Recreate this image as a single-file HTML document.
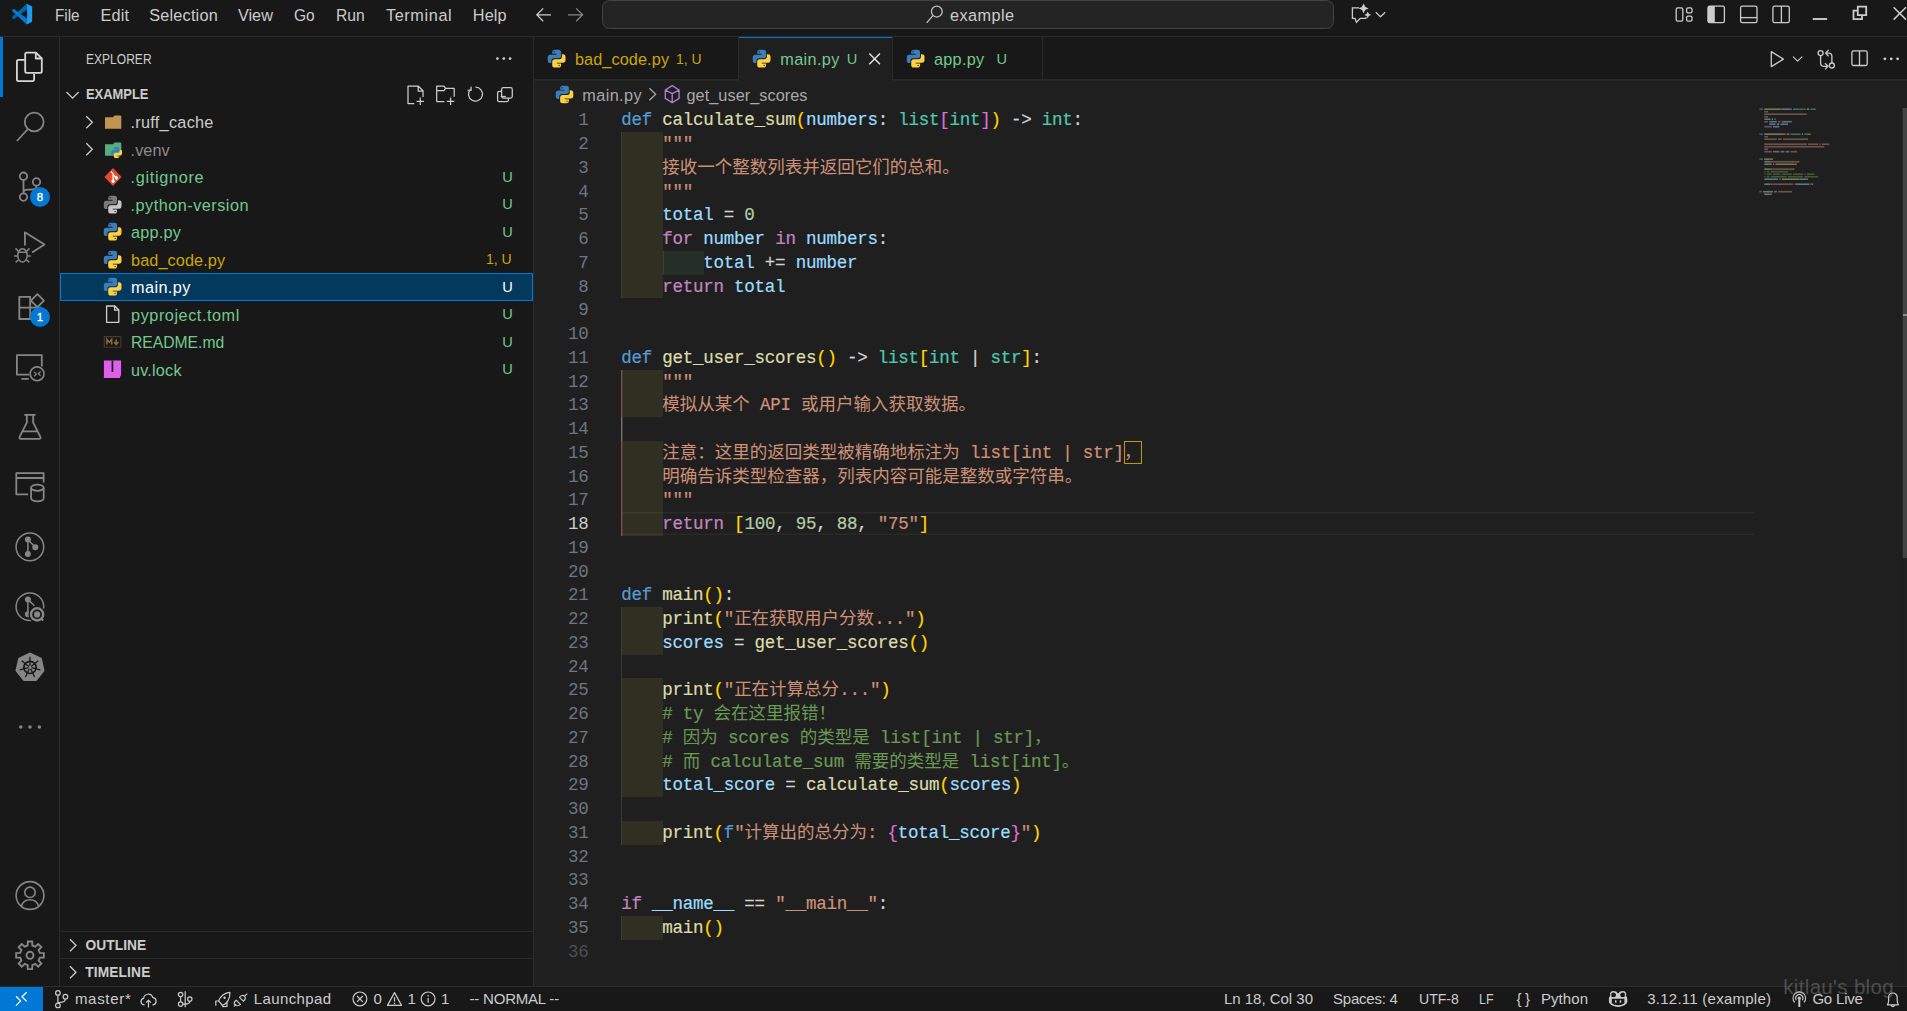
<!DOCTYPE html>
<html lang="en"><head><meta charset="utf-8"><title>main.py - example - Visual Studio Code</title>
<style>
*{box-sizing:border-box;margin:0;padding:0}
html,body{width:1907px;height:1011px;overflow:hidden;background:#1f1f1f}
body{position:relative;font-family:"Liberation Sans",sans-serif;color:#ccc;font-size:16.25px}
.abs{position:absolute}
.t{position:absolute;line-height:1;white-space:pre}
svg{position:absolute;overflow:visible}
.code{position:absolute;left:621.3px;white-space:pre;font-family:"Liberation Mono","Noto Sans CJK SC",monospace;font-size:17.5px;letter-spacing:-0.248px;-webkit-text-stroke:0.2px;line-height:23.75px;height:23.75px;color:#d4d4d4}
.code .z{font-family:"Liberation Mono","Noto Sans CJK SC",sans-serif;font-size:17.5px;line-height:1px;letter-spacing:0;-webkit-text-stroke:0}
.ln{position:absolute;left:534px;width:54.5px;text-align:right;font-family:"Liberation Mono",monospace;font-size:17.5px;letter-spacing:-0.248px;line-height:23.75px;height:23.75px;color:#6e7681}
.c-k{color:#569cd6}.c-c{color:#c586c0}.c-f{color:#dcdcaa}.c-v{color:#9cdcfe}.c-t{color:#4ec9b0}.c-s{color:#ce9178}.c-n{color:#b5cea8}.c-m{color:#6a9955}.c-p1{color:#ffd700}.c-p2{color:#da70d6}.c-p3{color:#179fff}.c-d{color:#d4d4d4}</style></head>
<body>
<div class="abs" style="left:0;top:0;width:1907px;height:36px;background:#181818"></div>
<div class="abs" style="left:0;top:36px;width:1907px;height:1px;background:#2b2b2b"></div>
<div class="abs" style="left:0;top:37px;width:59px;height:949px;background:#181818"></div>
<div class="abs" style="left:59px;top:37px;width:1px;height:949px;background:#2b2b2b"></div>
<div class="abs" style="left:60px;top:37px;width:473px;height:949px;background:#181818"></div>
<div class="abs" style="left:533px;top:37px;width:1px;height:949px;background:#2b2b2b"></div>
<div class="abs" style="left:534px;top:37px;width:1373px;height:43px;background:#181818"></div>
<div class="abs" style="left:534px;top:79.5px;width:1373px;height:1.25px;background:#2b2b2b"></div>
<div class="abs" style="left:0;top:986px;width:1907px;height:25px;background:#181818"></div>
<div class="abs" style="left:0;top:986px;width:1907px;height:1px;background:#2b2b2b"></div>
<svg style="left:12px;top:3.8px" width="20.2" height="20.2" viewBox="0 0 100 100">
<path fill="#0065a9" d="M96.46 10.8 75.86.88a6.23 6.23 0 0 0-7.11 1.2L1.3 63.58a4.17 4.17 0 0 0 0 6.17l5.51 5a2.77 2.77 0 0 0 3.54.16L93.36 13.37c2.73-2.07 6.64-.12 6.64 3.3v-.24a6.25 6.25 0 0 0-3.54-5.63z"/>
<path fill="#007acc" d="M96.46 89.2 75.86 99.12a6.23 6.23 0 0 1-7.11-1.2L1.3 36.42a4.17 4.17 0 0 1 0-6.17l5.51-5a2.77 2.77 0 0 1 3.54-.16L93.36 86.63c2.73 2.07 6.64.12 6.64-3.3v.24a6.25 6.25 0 0 1-3.54 5.63z"/>
<path fill="#1f9cf0" d="M75.86 99.13a6.23 6.23 0 0 1-7.11-1.21c2.31 2.3 6.25.67 6.25-2.59V4.67c0-3.26-3.94-4.89-6.25-2.59a6.23 6.23 0 0 1 7.11-1.21l20.6 9.91A6.25 6.25 0 0 1 100 16.41v67.18a6.25 6.25 0 0 1-3.54 5.63z"/>
</svg>
<span class="t " style="left:54.70px;top:6.94px;font-size:16.25px;color:#cccccc;transform-origin:0.00px 0;transform:scaleX(0.9371);">File</span>
<span class="t " style="left:100.60px;top:6.94px;font-size:16.25px;color:#cccccc;letter-spacing:0.100px;">Edit</span>
<span class="t " style="left:149.30px;top:6.94px;font-size:16.25px;color:#cccccc;letter-spacing:0.194px;">Selection</span>
<span class="t " style="left:237.90px;top:6.94px;font-size:16.25px;color:#cccccc;letter-spacing:0.017px;">View</span>
<span class="t " style="left:294.00px;top:6.94px;font-size:16.25px;color:#cccccc;transform-origin:0.00px 0;transform:scaleX(0.9563);">Go</span>
<span class="t " style="left:336.00px;top:6.94px;font-size:16.25px;color:#cccccc;transform-origin:0.00px 0;transform:scaleX(0.9613);">Run</span>
<span class="t " style="left:385.90px;top:6.94px;font-size:16.25px;color:#cccccc;letter-spacing:0.629px;">Terminal</span>
<span class="t " style="left:472.80px;top:6.94px;font-size:16.25px;color:#cccccc;letter-spacing:0.133px;">Help</span>
<svg style="left:530px;top:4px" width="60" height="22" viewBox="530 4 60 22" fill="none" stroke-width="1.3" stroke-linecap="butt">
<path stroke="#cccccc" d="M551 14.8H537M543.2 8.4l-6.4 6.4 6.4 6.4"/>
<path stroke="#858585" d="M568 14.8h14M576.2 8.4l6.4 6.4-6.4 6.4"/>
</svg>
<div class="abs" style="left:602px;top:0px;width:732px;height:29px;background:#242424;border:1px solid #434343;border-radius:7.5px"></div>
<svg style="left:924px;top:3px" width="24" height="24" viewBox="924 3 24 24" fill="none" stroke="#c4c4c4" stroke-width="1.25">
<circle cx="936.8" cy="11.6" r="5.4"/><path d="M932.9 15.6l-6.2 7.2"/></svg>
<span class="t " style="left:950.00px;top:6.74px;font-size:16.25px;color:#cccccc;letter-spacing:0.450px;">example</span>
<svg style="left:1350px;top:3px" width="40" height="24" viewBox="1350 3 40 24" fill="none" stroke="#cccccc" stroke-width="1.3" stroke-linejoin="round">
<path stroke-linejoin="miter" d="M1359.2 7.900H1352.400V18.300H1355L1356.400 22.300L1360.300 18.300H1366V17.300"/>
<path fill="#cccccc" stroke="none" d="M1363.60 3.50L1365.22 6.78L1368.50 8.40L1365.22 10.02L1363.60 13.30L1361.98 10.02L1358.70 8.40L1361.98 6.78Z"/>
<path fill="#cccccc" stroke="none" d="M1367.70 11.50L1368.82 13.78L1371.10 14.90L1368.82 16.02L1367.70 18.30L1366.58 16.02L1364.30 14.90L1366.58 13.78Z"/>
<path stroke-width="1.200" d="M1375.800 12.200l4.700 4.600 4.700-4.600"/>
</svg>
<svg style="left:1670px;top:0px" width="237" height="36" viewBox="1670 0 237 36" fill="none" stroke="#cccccc" stroke-width="1.3">
<rect x="1676.2" y="7.8" width="6.6" height="13.4" rx="1.6"/>
<rect x="1686.6" y="7.8" width="5.4" height="5" rx="1.4"/>
<rect x="1686.6" y="16.2" width="5.4" height="5" rx="1.4"/>
<rect x="1708" y="6.1" width="16.4" height="16.6" rx="1.8"/>
<path fill="#cccccc" stroke="none" d="M1709.6 6.1h5.2v16.6h-5.2a1.8 1.8 0 0 1-1.8-1.8V7.9a1.8 1.8 0 0 1 1.8-1.8z"/>
<rect x="1740.6" y="6.1" width="16.4" height="16.6" rx="1.8"/>
<path d="M1740.6 17.6h16.4"/>
<rect x="1772.9" y="6.1" width="16.4" height="16.6" rx="1.8"/>
<path d="M1781.4 6.1v16.6"/>
<path stroke-width="1.900" d="M1812.800 19h14.300"/>
<path stroke-width="1.800" d="M1857.800 6.700h8.400v8.400h-8.400zM1857.800 10.700h-4.300v8.500h8.500v-4"/>
<path stroke-width="1.5" d="M1893.6 7.2l12.4 12.4M1906 7.2l-12.4 12.4"/>
</svg>
<div class="abs" style="left:0;top:37px;width:2.6px;height:59.6px;background:#0078d4"></div>
<svg style="left:0;top:37px" width="59" height="949" viewBox="0 37 59 949" fill="none" stroke="#868686" stroke-width="1.8" stroke-linejoin="round">
<!-- files (active) -->
<g stroke="#d7d7d7">
<path d="M36 52.7h-9.2a1.6 1.6 0 0 0-1.6 1.6v17a1.6 1.6 0 0 0 1.6 1.6h13.4a1.6 1.6 0 0 0 1.6-1.6V58.5zM35.8 52.9v5.6h5.8"/>
<path d="M24.6 59.9h-6.1a1.6 1.6 0 0 0-1.6 1.6v18a1.6 1.6 0 0 0 1.6 1.6h14a1.6 1.6 0 0 0 1.6-1.6v-5.4"/>
</g>
<!-- search -->
<circle cx="34.2" cy="122" r="9.4"/><path d="M27.9 129l-11 12"/>
<!-- source control -->
<circle cx="23.5" cy="176.2" r="3.7"/><circle cx="23.5" cy="197.1" r="3.7"/><circle cx="36.5" cy="181.9" r="3.7"/>
<path d="M23.5 180v13.3M36.5 185.7c0 3.9-3 3.9-6.5 3.9h-2.5c-2 0-4 .5-4 3"/>
<!-- debug -->
<path d="M24.9 245.6V232.3l19.6 12.1-12.4 8"/>
<g stroke-width="1.5"><ellipse cx="22.5" cy="255.4" rx="4.7" ry="6.6"/><path d="M17.9 252.2h9.2M17.8 256h-3.6M27.2 256h3.6M18.4 251.3l-2.9-2.9M26.6 251.3l2.9-2.9M18.6 259.8l-3 2.6M26.4 259.8l3 2.6"/></g>
<!-- extensions -->
<path d="M19.3 296.9h10.9v10.7H41V319H19.3zM30.2 307.6V319M19.3 307.6h10.9"/>
<path d="M37.4 294.2l6.5 6.5-6.5 6.5-6.5-6.5z"/>
<!-- remote explorer -->
<path d="M29.4 374.6H16.9v-19.4h24.9v11.2M21.4 378.8h7.4"/>
<circle cx="37.1" cy="373.8" r="6.9" stroke-width="1.6"/>
<path stroke-width="1.3" d="M34.1 371.9l2.3 2.2-2.3 2.2M40.6 371.5l-2.3 2.2 2.3 2.2"/>
<!-- beaker -->
<path d="M24.3 414.8h11.3M26.8 414.8v7.9l-7.2 14.1c-.6 1.2 0 2 1.300 2h18.2c1.300 0 1.900-.8 1.300-2l-7.200-14.100v-7.900M22.600 431.400h14.800"/>
<!-- database window -->
<path d="M43.600 482.600v-9.400H16.300v21.100h11.800M16.300 478h27.300"/>
<ellipse cx="37.400" cy="487.700" rx="6.300" ry="3.100"/><path d="M31.100 487.700v10.600a6.300 3.100 0 0 0 12.600 0v-10.600"/>
<!-- gitlens -->
<g stroke-width="1.5"><circle cx="29.900" cy="546.900" r="13.800"/><path d="M27.900 539.500v14.600M27.900 539.500l7.400 7.700"/></g>
<g fill="#868686" stroke="none"><circle cx="27.900" cy="539.500" r="3"/><circle cx="27.900" cy="554.100" r="3"/><circle cx="35.300" cy="547.200" r="3"/></g>
<!-- gitlens inspect -->
<g stroke-width="1.5"><circle cx="29.900" cy="606.800" r="13.800"/><path d="M27.900 599.400v14.900M27.900 599.400l6.500 6.400"/></g>
<g fill="#868686" stroke="none"><circle cx="27.900" cy="599.400" r="3"/><circle cx="27.900" cy="614.300" r="3"/></g>
<circle cx="37.100" cy="614.400" r="8.600" fill="#181818" stroke="none"/>
<circle cx="37.100" cy="614.400" r="6.100" stroke-width="2.400"/><circle cx="37.100" cy="614.400" r="3.100" fill="#868686" stroke="none"/>
<path stroke-width="2.200" d="M41.600 619l1.500 1.500"/>
<!-- kubernetes -->
<path fill="#868686" stroke-width="2.500" d="M30.00 653.80L40.63 658.92L43.26 670.43L35.90 679.65L24.10 679.65L16.74 670.43L19.37 658.92Z"/>
<g stroke="#181818"><circle cx="30" cy="667.400" r="6.100" stroke-width="1.700"/><path stroke-width="1.300" d="M30.00 665.90L30.00 656.80M31.17 666.46L38.29 660.79M31.46 667.73L40.33 669.76M30.65 668.75L34.60 676.95M29.35 668.75L25.40 676.95M28.54 667.73L19.67 669.76M28.83 666.46L21.71 660.79"/></g>
<circle cx="30" cy="667.400" r="1.200" fill="#868686" stroke="none"/>
<!-- more -->
<g fill="#868686" stroke="none"><circle cx="20.800" cy="726.900" r="1.750"/><circle cx="30" cy="726.900" r="1.750"/><circle cx="39.400" cy="726.900" r="1.750"/></g>
<!-- account -->
<g stroke-width="1.600"><circle cx="30" cy="895.500" r="13.900"/><circle cx="30" cy="892.300" r="5.200"/><path d="M21.400 906.300c1.200-4.400 4.600-6.500 8.600-6.500s7.400 2.100 8.600 6.500"/></g>
<!-- settings -->
<path stroke-width="1.900" stroke-linejoin="miter" d="M27.64 945.48L27.81 941.47L32.19 941.47L32.36 945.48L35.28 946.69L38.23 943.97L41.33 947.07L38.61 950.02L39.82 952.94L43.83 953.11L43.83 957.49L39.82 957.66L38.61 960.58L41.33 963.53L38.23 966.63L35.28 963.91L32.36 965.12L32.19 969.13L27.81 969.13L27.64 965.12L24.72 963.91L21.77 966.63L18.67 963.53L21.39 960.58L20.18 957.66L16.17 957.49L16.17 953.11L20.18 952.94L21.39 950.02L18.67 947.07L21.77 943.97L24.72 946.69Z"/><circle cx="30" cy="955.300" r="3.500" stroke-width="1.900"/>
</svg>
<div class="abs" style="left:30px;top:186.7px;width:20px;height:20px;border-radius:10px;background:#0078d4;color:#fff;font-size:11.5px;-webkit-text-stroke:0.35px;line-height:20px;text-align:center">8</div>
<div class="abs" style="left:30px;top:306.7px;width:20px;height:20px;border-radius:10px;background:#0078d4;color:#fff;font-size:11.5px;-webkit-text-stroke:0.35px;line-height:20px;text-align:center">1</div>
<span class="t " style="left:85.50px;top:52.86px;font-size:13.75px;color:#cccccc;transform-origin:0.00px 0;transform:scaleX(0.8760);">EXPLORER</span>
<svg style="left:490px;top:52px" width="30" height="14" viewBox="490 52 30 14" fill="#cccccc"><circle cx="497.4" cy="58.6" r="1.35"/><circle cx="503.8" cy="58.6" r="1.35"/><circle cx="510.1" cy="58.6" r="1.35"/></svg>
<svg style="left:60px;top:80px" width="30" height="28" viewBox="60 80 30 28" fill="none" stroke="#cccccc" stroke-width="1.3"><path d="M66.5 92l6.100 6.100 6.100-6.100"/></svg>
<span class="t " style="left:85.50px;top:88.06px;font-size:13.75px;color:#cccccc;transform-origin:0.00px 0;transform:scaleX(0.9398);font-weight:bold;">EXAMPLE</span>
<svg style="left:400px;top:81px" width="120" height="27" viewBox="400 81 120 27" fill="none" stroke="#cccccc" stroke-width="1.25" stroke-linejoin="round">
<path d="M414.200 103.600h-6.200V86.200h10.400l4.600 4.600v6.100M418.200 86.400v4.600h4.600M420.300 97.600v7.400M416.600 101.300h7.400"/>
<path d="M444.400 101.500h-7.700V86.200h7.300l1.600 2.200h8.600v8.300M436.700 90.600h7.300l1.600-2.200M450.600 97.600v7.400M446.900 101.300h7.400"/>
<path d="M470.300 89.400a7 7 0 1 0 5.200-2.300M471 86.600l.2 3.600-3.600.2" stroke-linejoin="miter"/>
<rect x="501.600" y="87.600" width="10.700" height="10.400" rx="1.800"/>
<path d="M501.400 91.300h-2a1.800 1.800 0 0 0-1.800 1.800v6.800a1.800 1.800 0 0 0 1.800 1.800h7.200a1.800 1.800 0 0 0 1.800-1.800v-1.800" />
<path d="M500.700 96.500h5.200"/>
</svg>
<div class="abs" style="left:60px;top:273.25px;width:473px;height:27.5px;background:#04395e;border:1px solid #0078d4"></div>
<span class="t " style="left:130.50px;top:114.14px;font-size:16.25px;color:#cccccc;letter-spacing:0.280px;">.ruff_cache</span>
<svg style="left:84px;top:113.80px" width="12" height="16" viewBox="84 0 12 16" fill="none" stroke="#cccccc" stroke-width="1.3"><path d="M86.300 2.200l6 6-6 6"/></svg>
<svg style="left:103px;top:111.80px" width="20" height="20" viewBox="0 0 20 20"><path fill="#c09553" d="M2 5.300h8l1.500-1.800h5.700a1.100 1.100 0 0 1 1.100 1.100v12.100H2z"/></svg>
<span class="t " style="left:130.60px;top:141.64px;font-size:16.25px;color:#8c8c8c;letter-spacing:0.050px;">.venv</span>
<svg style="left:84px;top:141.30px" width="12" height="16" viewBox="84 0 12 16" fill="none" stroke="#cccccc" stroke-width="1.3"><path d="M86.300 2.200l6 6-6 6"/></svg>
<svg style="left:103px;top:139.30px" width="20" height="20" viewBox="0 0 20 20"><path fill="#57ae7d" d="M2 5.300h8l1.500-1.800h5.700a1.100 1.100 0 0 1 1.100 1.100v12.100H2z"/></svg>
<svg style="left:110.10px;top:145.80px" width="13.20" height="13.20" viewBox="0 0 24 24"><path fill="#3c7ebb" d="M9.860 2A2.860 2.860 0 0 0 7 4.860v1.680h4.290c.390 0 .710.570.710.960H4.860A2.860 2.860 0 0 0 2 10.360v3.780A2.860 2.860 0 0 0 4.860 17h1.180v-2.680a2.850 2.850 0 0 1 2.850-2.860h5.250A2.860 2.860 0 0 0 17 8.610V4.860A2.860 2.860 0 0 0 14.140 2zm-.72 1.610c.4 0 .72.120.72.710s-.32.890-.72.890c-.39 0-.71-.3-.71-.89s.32-.71.710-.71z"/><path fill="#fdd142" d="M17.960 7v2.680a2.850 2.850 0 0 1-2.850 2.860H9.860A2.850 2.850 0 0 0 7 15.390v3.750A2.860 2.860 0 0 0 9.860 22h4.280A2.860 2.860 0 0 0 17 19.140v-1.680h-4.290c-.39 0-.71-.57-.71-.96h7.140A2.860 2.860 0 0 0 22 13.640V9.860A2.860 2.860 0 0 0 19.140 7zm-3.100 11.790c.39 0 .71.300.71.890a.71.710 0 0 1-.71.710c-.4 0-.72-.12-.72-.71s.32-.89.720-.89z"/></svg>
<span class="t " style="left:130.60px;top:169.14px;font-size:16.25px;color:#73c991;letter-spacing:0.683px;">.gitignore</span>
<span class="t " style="left:502.30px;top:169.94px;font-size:14.60px;color:#73c991;">U</span>
<svg style="left:103px;top:167.00px" width="20" height="20" viewBox="0 0 20 20"><path fill="#e24a2f" d="M10 1l8.600 9-8.600 9-8.600-9z"/><g stroke="#fff" stroke-width="1.300" fill="#fff"><path d="M8 4.500l2.100 2.400v7M10.100 7.500l3.100 3.200" fill="none"/><circle cx="10.100" cy="14.200" r="1.100"/><circle cx="13.400" cy="10.900" r="1.100"/></g></svg>
<span class="t " style="left:130.60px;top:196.64px;font-size:16.25px;color:#73c991;letter-spacing:0.486px;">.python-version</span>
<span class="t " style="left:502.30px;top:197.44px;font-size:14.60px;color:#73c991;">U</span>
<svg style="left:102.15px;top:193.75px" width="21.30" height="21.30" viewBox="0 0 24 24"><path fill="#7a7a7a" d="M9.860 2A2.860 2.860 0 0 0 7 4.860v1.680h4.290c.390 0 .710.570.710.960H4.860A2.860 2.860 0 0 0 2 10.360v3.780A2.860 2.860 0 0 0 4.860 17h1.180v-2.680a2.850 2.850 0 0 1 2.850-2.860h5.250A2.860 2.860 0 0 0 17 8.610V4.860A2.860 2.860 0 0 0 14.140 2zm-.72 1.610c.4 0 .72.120.72.710s-.32.890-.72.890c-.39 0-.71-.3-.71-.89s.32-.71.710-.71z"/><path fill="#c8c8c8" d="M17.960 7v2.680a2.850 2.850 0 0 1-2.850 2.860H9.860A2.850 2.850 0 0 0 7 15.390v3.750A2.860 2.860 0 0 0 9.860 22h4.280A2.860 2.860 0 0 0 17 19.140v-1.680h-4.290c-.39 0-.71-.57-.71-.96h7.140A2.860 2.860 0 0 0 22 13.640V9.860A2.860 2.860 0 0 0 19.140 7zm-3.100 11.790c.39 0 .71.300.71.890a.71.710 0 0 1-.71.710c-.4 0-.72-.12-.72-.71s.32-.89.720-.89z"/></svg>
<span class="t " style="left:130.90px;top:224.14px;font-size:16.25px;color:#73c991;letter-spacing:0.260px;">app.py</span>
<span class="t " style="left:502.30px;top:224.94px;font-size:14.60px;color:#73c991;">U</span>
<svg style="left:102.15px;top:221.25px" width="21.30" height="21.30" viewBox="0 0 24 24"><path fill="#3c7ebb" d="M9.860 2A2.860 2.860 0 0 0 7 4.860v1.680h4.290c.390 0 .710.570.710.960H4.860A2.860 2.860 0 0 0 2 10.360v3.780A2.860 2.860 0 0 0 4.860 17h1.180v-2.680a2.850 2.850 0 0 1 2.850-2.860h5.250A2.860 2.860 0 0 0 17 8.610V4.860A2.860 2.860 0 0 0 14.140 2zm-.72 1.610c.4 0 .72.120.72.710s-.32.890-.72.890c-.39 0-.71-.3-.71-.89s.32-.71.710-.71z"/><path fill="#fdd142" d="M17.960 7v2.680a2.850 2.850 0 0 1-2.850 2.860H9.860A2.850 2.850 0 0 0 7 15.390v3.750A2.860 2.860 0 0 0 9.860 22h4.280A2.860 2.860 0 0 0 17 19.140v-1.680h-4.290c-.39 0-.71-.57-.71-.96h7.140A2.860 2.860 0 0 0 22 13.640V9.860A2.860 2.860 0 0 0 19.140 7zm-3.100 11.790c.39 0 .71.300.71.890a.71.710 0 0 1-.71.710c-.4 0-.72-.12-.72-.71s.32-.89.720-.89z"/></svg>
<span class="t " style="left:131.10px;top:251.64px;font-size:16.25px;color:#cca700;letter-spacing:0.095px;">bad_code.py</span>
<span class="t " style="left:486.30px;top:252.44px;font-size:14.60px;color:#cca700;transform-origin:0.00px 0;transform:scaleX(0.9585);">1, U</span>
<svg style="left:102.15px;top:248.75px" width="21.30" height="21.30" viewBox="0 0 24 24"><path fill="#3c7ebb" d="M9.860 2A2.860 2.860 0 0 0 7 4.860v1.680h4.290c.390 0 .710.570.710.960H4.860A2.860 2.860 0 0 0 2 10.360v3.780A2.860 2.860 0 0 0 4.860 17h1.180v-2.680a2.850 2.850 0 0 1 2.850-2.860h5.250A2.860 2.860 0 0 0 17 8.610V4.860A2.860 2.860 0 0 0 14.140 2zm-.72 1.610c.4 0 .72.120.72.710s-.32.890-.72.890c-.39 0-.71-.3-.71-.89s.32-.71.710-.71z"/><path fill="#fdd142" d="M17.960 7v2.680a2.850 2.850 0 0 1-2.850 2.860H9.860A2.850 2.850 0 0 0 7 15.390v3.750A2.860 2.860 0 0 0 9.860 22h4.280A2.860 2.860 0 0 0 17 19.140v-1.680h-4.290c-.39 0-.71-.57-.71-.96h7.140A2.860 2.860 0 0 0 22 13.640V9.860A2.860 2.860 0 0 0 19.140 7zm-3.100 11.790c.39 0 .71.300.71.890a.71.710 0 0 1-.71.710c-.4 0-.72-.12-.72-.71s.32-.89.720-.89z"/></svg>
<span class="t " style="left:131.10px;top:279.14px;font-size:16.25px;color:#ffffff;letter-spacing:0.383px;">main.py</span>
<span class="t " style="left:502.30px;top:279.94px;font-size:14.60px;color:#ffffff;">U</span>
<svg style="left:102.15px;top:276.25px" width="21.30" height="21.30" viewBox="0 0 24 24"><path fill="#3c7ebb" d="M9.860 2A2.860 2.860 0 0 0 7 4.860v1.680h4.290c.390 0 .710.570.710.960H4.860A2.860 2.860 0 0 0 2 10.360v3.780A2.860 2.860 0 0 0 4.860 17h1.180v-2.680a2.850 2.850 0 0 1 2.850-2.860h5.250A2.860 2.860 0 0 0 17 8.610V4.860A2.860 2.860 0 0 0 14.140 2zm-.72 1.610c.4 0 .72.120.72.710s-.32.890-.72.890c-.39 0-.71-.3-.71-.89s.32-.71.710-.71z"/><path fill="#fdd142" d="M17.960 7v2.680a2.850 2.850 0 0 1-2.850 2.860H9.860A2.850 2.850 0 0 0 7 15.390v3.750A2.860 2.860 0 0 0 9.860 22h4.280A2.860 2.860 0 0 0 17 19.140v-1.680h-4.290c-.39 0-.71-.57-.71-.96h7.140A2.860 2.860 0 0 0 22 13.640V9.860A2.860 2.860 0 0 0 19.140 7zm-3.100 11.790c.39 0 .71.300.71.890a.71.710 0 0 1-.71.710c-.4 0-.72-.12-.72-.71s.32-.89.720-.89z"/></svg>
<span class="t " style="left:131.10px;top:306.64px;font-size:16.25px;color:#73c991;letter-spacing:0.542px;">pyproject.toml</span>
<span class="t " style="left:502.30px;top:307.44px;font-size:14.60px;color:#73c991;">U</span>
<svg style="left:103px;top:304.30px" width="20" height="20" viewBox="0 0 20 20" fill="none" stroke="#d0d0d0" stroke-width="1.300" stroke-linejoin="round"><path d="M3.600 2h8.200l4 4v12.300H3.600zM11.600 2.200v4h4"/></svg>
<span class="t " style="left:131.10px;top:334.14px;font-size:16.25px;color:#73c991;transform-origin:0.00px 0;transform:scaleX(0.9648);">README.md</span>
<span class="t " style="left:502.30px;top:334.94px;font-size:14.60px;color:#73c991;">U</span>
<svg style="left:103px;top:332.00px" width="20" height="20" viewBox="0 0 20 20" fill="none"><rect x="1.300" y="4.600" width="16.600" height="10.700" rx=".6" stroke="#4a3a2a" stroke-width="1.100"/><path stroke="#8a6a45" stroke-width="1.500" d="M3.900 12.600V7.400l2.400 3 2.400-3v5.200M13.200 7.200v4.600M11 10l2.200 2.500 2.200-2.500"/></svg>
<span class="t " style="left:130.90px;top:361.64px;font-size:16.25px;color:#73c991;letter-spacing:0.217px;">uv.lock</span>
<span class="t " style="left:502.30px;top:362.44px;font-size:14.60px;color:#73c991;">U</span>
<svg style="left:103px;top:359.00px" width="20" height="20" viewBox="0 0 20 20"><path fill="#de5fe9" d="M.9 1.500h17.200v15.800l-1.200 1.600H.9z"/><path fill="#181818" d="M8.600 1.500h1.700v11.400H8.600zM17.200 16.800h.9v2.100h-.9z"/></svg>
<div class="abs" style="left:60px;top:931.0px;width:473px;height:1px;background:#2b2b2b"></div>
<span class="t " style="left:85.50px;top:938.86px;font-size:13.75px;color:#cccccc;letter-spacing:0.075px;font-weight:bold;">OUTLINE</span>
<svg style="left:66px;top:936.70px" width="14" height="16" viewBox="66 0 14 16" fill="none" stroke="#cccccc" stroke-width="1.300"><path d="M70 2.200l6 6-6 6"/></svg>
<div class="abs" style="left:60px;top:958.0px;width:473px;height:1px;background:#2b2b2b"></div>
<span class="t " style="left:85.20px;top:966.36px;font-size:13.75px;color:#cccccc;letter-spacing:0.136px;font-weight:bold;">TIMELINE</span>
<svg style="left:66px;top:964.20px" width="14" height="16" viewBox="66 0 14 16" fill="none" stroke="#cccccc" stroke-width="1.300"><path d="M70 2.200l6 6-6 6"/></svg>
<div class="abs" style="left:534px;top:79px;width:1373px;height:1px;background:#2a2a2a"></div>
<div class="abs" style="left:534px;top:80px;width:1373px;height:1px;background:#252525"></div>
<div class="abs" style="left:738px;top:37px;width:1px;height:43px;background:#2b2b2b"></div>
<div class="abs" style="left:1042px;top:37px;width:1px;height:43px;background:#2b2b2b"></div>
<div class="abs" style="left:739px;top:37px;width:153px;height:44px;background:#1f1f1f"></div>
<div class="abs" style="left:739px;top:37px;width:153px;height:1px;background:#0078d4"></div>
<div class="abs" style="left:892px;top:37px;width:1px;height:43px;background:#2b2b2b"></div>
<svg style="left:545.85px;top:48.25px" width="21.30" height="21.30" viewBox="0 0 24 24"><path fill="#3c7ebb" d="M9.860 2A2.860 2.860 0 0 0 7 4.860v1.680h4.290c.390 0 .710.570.710.960H4.860A2.860 2.860 0 0 0 2 10.360v3.780A2.860 2.860 0 0 0 4.860 17h1.180v-2.680a2.850 2.850 0 0 1 2.850-2.860h5.250A2.860 2.860 0 0 0 17 8.610V4.860A2.860 2.860 0 0 0 14.140 2zm-.72 1.610c.4 0 .72.120.72.710s-.32.890-.72.890c-.39 0-.71-.3-.71-.89s.32-.71.710-.71z"/><path fill="#fdd142" d="M17.960 7v2.680a2.850 2.850 0 0 1-2.850 2.860H9.860A2.850 2.850 0 0 0 7 15.390v3.750A2.860 2.860 0 0 0 9.860 22h4.280A2.860 2.860 0 0 0 17 19.140v-1.680h-4.290c-.39 0-.71-.57-.71-.96h7.140A2.860 2.860 0 0 0 22 13.640V9.860A2.860 2.860 0 0 0 19.140 7zm-3.100 11.790c.39 0 .71.300.71.890a.71.710 0 0 1-.71.710c-.4 0-.72-.12-.72-.71s.32-.89.720-.89z"/></svg>
<span class="t " style="left:574.90px;top:51.04px;font-size:16.25px;color:#cca700;letter-spacing:0.105px;">bad_code.py</span>
<span class="t " style="left:676.30px;top:52.24px;font-size:14.60px;color:#cca700;transform-origin:0.00px 0;transform:scaleX(0.9509);">1, U</span>
<svg style="left:751.05px;top:48.25px" width="21.30" height="21.30" viewBox="0 0 24 24"><path fill="#3c7ebb" d="M9.860 2A2.860 2.860 0 0 0 7 4.860v1.680h4.290c.390 0 .710.570.710.960H4.860A2.860 2.860 0 0 0 2 10.360v3.780A2.860 2.860 0 0 0 4.860 17h1.180v-2.680a2.850 2.850 0 0 1 2.850-2.860h5.250A2.860 2.860 0 0 0 17 8.610V4.860A2.860 2.860 0 0 0 14.140 2zm-.72 1.610c.4 0 .72.120.72.710s-.32.890-.72.890c-.39 0-.71-.3-.71-.89s.32-.71.710-.71z"/><path fill="#fdd142" d="M17.960 7v2.680a2.850 2.850 0 0 1-2.850 2.860H9.860A2.850 2.850 0 0 0 7 15.390v3.750A2.860 2.860 0 0 0 9.860 22h4.280A2.860 2.860 0 0 0 17 19.140v-1.680h-4.290c-.39 0-.71-.57-.71-.96h7.140A2.860 2.860 0 0 0 22 13.640V9.860A2.860 2.860 0 0 0 19.140 7zm-3.100 11.790c.39 0 .71.300.71.890a.71.710 0 0 1-.71.710c-.4 0-.72-.12-.72-.71s.32-.89.720-.89z"/></svg>
<span class="t " style="left:780.30px;top:51.04px;font-size:16.25px;color:#73c991;letter-spacing:0.350px;">main.py</span>
<span class="t " style="left:846.80px;top:52.24px;font-size:14.60px;color:#73c991;">U</span>
<svg style="left:866px;top:50px" width="18" height="18" viewBox="866 50 18 18" fill="none" stroke="#e6e6e6" stroke-width="1.400"><path d="M869.300 53.500l10.700 10.700M880 53.500l-10.700 10.700"/></svg>
<svg style="left:905.35px;top:48.25px" width="21.30" height="21.30" viewBox="0 0 24 24"><path fill="#3c7ebb" d="M9.860 2A2.860 2.860 0 0 0 7 4.860v1.680h4.290c.390 0 .710.570.710.960H4.860A2.860 2.860 0 0 0 2 10.360v3.780A2.860 2.860 0 0 0 4.860 17h1.180v-2.680a2.850 2.850 0 0 1 2.850-2.860h5.250A2.860 2.860 0 0 0 17 8.610V4.860A2.860 2.860 0 0 0 14.140 2zm-.72 1.610c.4 0 .72.120.72.710s-.32.890-.72.890c-.39 0-.71-.3-.71-.89s.32-.71.710-.71z"/><path fill="#fdd142" d="M17.960 7v2.680a2.850 2.850 0 0 1-2.850 2.860H9.860A2.850 2.850 0 0 0 7 15.390v3.750A2.860 2.860 0 0 0 9.860 22h4.280A2.860 2.860 0 0 0 17 19.140v-1.680h-4.290c-.39 0-.71-.57-.71-.96h7.140A2.860 2.860 0 0 0 22 13.640V9.860A2.860 2.860 0 0 0 19.140 7zm-3.100 11.790c.39 0 .71.300.71.890a.71.710 0 0 1-.71.710c-.4 0-.72-.12-.72-.71s.32-.89.720-.89z"/></svg>
<span class="t " style="left:933.90px;top:51.04px;font-size:16.25px;color:#73c991;letter-spacing:0.300px;">app.py</span>
<span class="t " style="left:996.50px;top:52.24px;font-size:14.60px;color:#73c991;">U</span>
<svg style="left:1760px;top:44px" width="147" height="30" viewBox="1760 44 147 30" fill="none" stroke="#cccccc" stroke-width="1.300" stroke-linejoin="round">
<path d="M1771.300 51.600v15l12.100-7.500z"/>
<path stroke-width="1.100" d="M1793 56.700l4.600 4.500 4.600-4.500"/>
<circle cx="1820.600" cy="53.100" r="2.500"/><circle cx="1831.900" cy="65.500" r="2.500"/>
<path d="M1820.600 55.700v7.400a3.200 3.200 0 0 0 3.200 3.200h3.600M1825 63.200l3 3.100-3 3.100"/>
<path d="M1831.900 62.900v-6.600a3.200 3.200 0 0 0-3.200-3.200h-2.400M1828.600 50l-3 3.100 3 3.100"/>
<rect x="1851.900" y="50.900" width="15.300" height="14.600" rx="1.500"/><path d="M1859.500 50.900v14.600"/>
<g fill="#cccccc" stroke="none"><circle cx="1884.900" cy="58.800" r="1.400"/><circle cx="1891.200" cy="58.800" r="1.400"/><circle cx="1897.600" cy="58.800" r="1.400"/></g>
</svg>
<svg style="left:553.50px;top:83.70px" width="21.00" height="21.00" viewBox="0 0 24 24"><path fill="#3c7ebb" d="M9.860 2A2.860 2.860 0 0 0 7 4.860v1.680h4.290c.390 0 .710.570.710.960H4.860A2.860 2.860 0 0 0 2 10.360v3.780A2.860 2.860 0 0 0 4.860 17h1.180v-2.680a2.850 2.850 0 0 1 2.850-2.860h5.250A2.860 2.860 0 0 0 17 8.610V4.860A2.860 2.860 0 0 0 14.140 2zm-.72 1.610c.4 0 .72.120.72.710s-.32.890-.72.890c-.39 0-.71-.3-.71-.89s.32-.71.710-.71z"/><path fill="#fdd142" d="M17.960 7v2.680a2.850 2.850 0 0 1-2.850 2.860H9.860A2.850 2.850 0 0 0 7 15.390v3.750A2.860 2.860 0 0 0 9.860 22h4.280A2.860 2.860 0 0 0 17 19.140v-1.680h-4.290c-.39 0-.71-.57-.71-.96h7.140A2.860 2.860 0 0 0 22 13.640V9.860A2.860 2.860 0 0 0 19.140 7zm-3.100 11.790c.39 0 .71.300.71.890a.71.710 0 0 1-.71.710c-.4 0-.72-.12-.72-.71s.32-.89.720-.89z"/></svg>
<span class="t " style="left:582.30px;top:86.74px;font-size:16.25px;color:#a9a9a9;letter-spacing:0.400px;">main.py</span>
<svg style="left:645px;top:84px" width="16" height="20" viewBox="645 84 16 20" fill="none" stroke="#a9a9a9" stroke-width="1.200"><path d="M649.400 88.300l6.300 6-6.300 6"/></svg>
<svg style="left:662px;top:83px" width="20" height="22" viewBox="662 83 20 22" fill="none" stroke="#b180d7" stroke-width="1.300" stroke-linejoin="round"><path d="M672.200 85.600l6.900 4.400v8.400l-6.900 4.300-6.900-4.300V90zM665.300 90l6.900 3.600 6.900-3.600M672.200 93.600v9"/></svg>
<span class="t " style="left:686.50px;top:86.74px;font-size:16.25px;color:#a9a9a9;letter-spacing:0.061px;">get_user_scores</span>
<div class="abs" style="left:621.30px;top:132.00px;width:41.72px;height:23.75px;background:#2f2f22"></div>
<div class="abs" style="left:621.30px;top:155.75px;width:41.72px;height:23.75px;background:#2f2f22"></div>
<div class="abs" style="left:621.30px;top:179.50px;width:41.72px;height:23.75px;background:#2f2f22"></div>
<div class="abs" style="left:621.30px;top:203.25px;width:41.72px;height:23.75px;background:#2f2f22"></div>
<div class="abs" style="left:621.30px;top:227.00px;width:41.72px;height:23.75px;background:#2f2f22"></div>
<div class="abs" style="left:621.30px;top:250.75px;width:41.72px;height:23.75px;background:#2f2f22"></div>
<div class="abs" style="left:663.02px;top:250.75px;width:41.02px;height:23.75px;background:#252e27"></div>
<div class="abs" style="left:663.00px;top:250.75px;width:1.00px;height:23.75px;background:#3a3f3a"></div>
<div class="abs" style="left:621.30px;top:274.50px;width:41.72px;height:23.75px;background:#2f2f22"></div>
<div class="abs" style="left:621.30px;top:369.50px;width:41.72px;height:23.75px;background:#2f2f22"></div>
<div class="abs" style="left:621.30px;top:393.25px;width:41.72px;height:23.75px;background:#2f2f22"></div>
<div class="abs" style="left:621.30px;top:440.75px;width:41.72px;height:23.75px;background:#2f2f22"></div>
<div class="abs" style="left:621.30px;top:464.50px;width:41.72px;height:23.75px;background:#2f2f22"></div>
<div class="abs" style="left:621.30px;top:488.25px;width:41.72px;height:23.75px;background:#2f2f22"></div>
<div class="abs" style="left:621.30px;top:512.00px;width:41.72px;height:23.75px;background:#2f2f22"></div>
<div class="abs" style="left:621.30px;top:607.00px;width:41.72px;height:23.75px;background:#2f2f22"></div>
<div class="abs" style="left:621.30px;top:630.75px;width:41.72px;height:23.75px;background:#2f2f22"></div>
<div class="abs" style="left:621.30px;top:678.25px;width:41.72px;height:23.75px;background:#2f2f22"></div>
<div class="abs" style="left:621.30px;top:702.00px;width:41.72px;height:23.75px;background:#2f2f22"></div>
<div class="abs" style="left:621.30px;top:725.75px;width:41.72px;height:23.75px;background:#2f2f22"></div>
<div class="abs" style="left:621.30px;top:749.50px;width:41.72px;height:23.75px;background:#2f2f22"></div>
<div class="abs" style="left:621.30px;top:773.25px;width:41.72px;height:23.75px;background:#2f2f22"></div>
<div class="abs" style="left:621.30px;top:820.75px;width:41.72px;height:23.75px;background:#2f2f22"></div>
<div class="abs" style="left:621.30px;top:915.75px;width:41.72px;height:23.75px;background:#2f2f22"></div>
<div class="abs" style="left:621.00px;top:132.00px;width:1.00px;height:166.25px;background:#3e3e35"></div>
<div class="abs" style="left:621.00px;top:607.00px;width:1.00px;height:237.50px;background:#3e3e35"></div>
<div class="abs" style="left:621.00px;top:654.50px;width:1.00px;height:23.75px;background:#3a3a3a"></div>
<div class="abs" style="left:621.00px;top:797.00px;width:1.00px;height:23.75px;background:#3a3a3a"></div>
<div class="abs" style="left:621.00px;top:915.75px;width:1.00px;height:23.75px;background:#3e3e35"></div>
<div class="abs" style="left:621.00px;top:369.50px;width:1.00px;height:166.25px;background:#7d5248"></div>
<div class="abs" style="left:621.00px;top:417.00px;width:1.00px;height:23.75px;background:#707070"></div>
<div class="abs" style="left:622.00px;top:369.50px;width:1.00px;height:166.25px;background:rgba(140,90,78,0.28)"></div>
<div class="abs" style="left:622.00px;top:417.00px;width:1.00px;height:23.75px;background:rgba(112,112,112,0.3)"></div>
<div class="abs" style="left:621.00px;top:512.00px;width:1133.00px;height:1.00px;background:rgba(255,255,255,0.05)"></div>
<div class="abs" style="left:621.00px;top:513.00px;width:1133.00px;height:1.00px;background:rgba(255,255,255,0.018)"></div>
<div class="abs" style="left:621.00px;top:533.00px;width:1133.00px;height:1.00px;background:rgba(255,255,255,0.015)"></div>
<div class="abs" style="left:621.00px;top:534.00px;width:1133.00px;height:1.00px;background:rgba(255,255,255,0.05)"></div>
<div class="abs" style="left:1124px;top:440.75px;width:17.500px;height:23.500px;border:1px solid #bd9b03"></div>
<div class="ln" style="top:109.25px;">1</div>
<div class="code" style="top:109.25px"><span class="c-k">def</span> <span class="c-f">calculate_sum</span><span class="c-p1">(</span><span class="c-v">numbers</span>: <span class="c-t">list</span><span class="c-p2">[</span><span class="c-t">int</span><span class="c-p2">]</span><span class="c-p1">)</span> -&gt; <span class="c-t">int</span>:</div>
<div class="ln" style="top:133.00px;">2</div>
<div class="code" style="top:133.00px">    <span class="c-s">&quot;&quot;&quot;</span></div>
<div class="ln" style="top:156.75px;">3</div>
<div class="code" style="top:156.75px">    <span class="c-s"><span class="z">接收一个整数列表并返回它们的总和。</span></span></div>
<div class="ln" style="top:180.50px;">4</div>
<div class="code" style="top:180.50px">    <span class="c-s">&quot;&quot;&quot;</span></div>
<div class="ln" style="top:204.25px;">5</div>
<div class="code" style="top:204.25px">    <span class="c-v">total</span> = <span class="c-n">0</span></div>
<div class="ln" style="top:228.00px;">6</div>
<div class="code" style="top:228.00px">    <span class="c-c">for</span> <span class="c-v">number</span> <span class="c-c">in</span> <span class="c-v">numbers</span>:</div>
<div class="ln" style="top:251.75px;">7</div>
<div class="code" style="top:251.75px">        <span class="c-v">total</span> += <span class="c-v">number</span></div>
<div class="ln" style="top:275.50px;">8</div>
<div class="code" style="top:275.50px">    <span class="c-c">return</span> <span class="c-v">total</span></div>
<div class="ln" style="top:299.25px;">9</div>
<div class="ln" style="top:323.00px;">10</div>
<div class="ln" style="top:346.75px;">11</div>
<div class="code" style="top:346.75px"><span class="c-k">def</span> <span class="c-f">get_user_scores</span><span class="c-p1">()</span> -&gt; <span class="c-t">list</span><span class="c-p1">[</span><span class="c-t">int</span> | <span class="c-t">str</span><span class="c-p1">]</span>:</div>
<div class="ln" style="top:370.50px;">12</div>
<div class="code" style="top:370.50px">    <span class="c-s">&quot;&quot;&quot;</span></div>
<div class="ln" style="top:394.25px;">13</div>
<div class="code" style="top:394.25px">    <span class="c-s"><span class="z">模拟从某个</span> API <span class="z">或用户输入获取数据。</span></span></div>
<div class="ln" style="top:418.00px;">14</div>
<div class="ln" style="top:441.75px;">15</div>
<div class="code" style="top:441.75px">    <span class="c-s"><span class="z">注意：这里的返回类型被精确地标注为</span> list[int | str]<span class="z">，</span></span></div>
<div class="ln" style="top:465.50px;">16</div>
<div class="code" style="top:465.50px">    <span class="c-s"><span class="z">明确告诉类型检查器，列表内容可能是整数或字符串。</span></span></div>
<div class="ln" style="top:489.25px;">17</div>
<div class="code" style="top:489.25px">    <span class="c-s">&quot;&quot;&quot;</span></div>
<div class="ln" style="top:513.00px;color:#cccccc;">18</div>
<div class="code" style="top:513.00px">    <span class="c-c">return</span> <span class="c-p1">[</span><span class="c-n">100</span>, <span class="c-n">95</span>, <span class="c-n">88</span>, <span class="c-s">&quot;75&quot;</span><span class="c-p1">]</span></div>
<div class="ln" style="top:536.75px;">19</div>
<div class="ln" style="top:560.50px;">20</div>
<div class="ln" style="top:584.25px;">21</div>
<div class="code" style="top:584.25px"><span class="c-k">def</span> <span class="c-f">main</span><span class="c-p1">()</span>:</div>
<div class="ln" style="top:608.00px;">22</div>
<div class="code" style="top:608.00px">    <span class="c-f">print</span><span class="c-p1">(</span><span class="c-s">&quot;<span class="z">正在获取用户分数</span>...&quot;</span><span class="c-p1">)</span></div>
<div class="ln" style="top:631.75px;">23</div>
<div class="code" style="top:631.75px">    <span class="c-v">scores</span> = <span class="c-f">get_user_scores</span><span class="c-p1">()</span></div>
<div class="ln" style="top:655.50px;">24</div>
<div class="ln" style="top:679.25px;">25</div>
<div class="code" style="top:679.25px">    <span class="c-f">print</span><span class="c-p1">(</span><span class="c-s">&quot;<span class="z">正在计算总分</span>...&quot;</span><span class="c-p1">)</span></div>
<div class="ln" style="top:703.00px;">26</div>
<div class="code" style="top:703.00px">    <span class="c-m"># ty <span class="z">会在这里报错！</span></span></div>
<div class="ln" style="top:726.75px;">27</div>
<div class="code" style="top:726.75px">    <span class="c-m"># <span class="z">因为</span> scores <span class="z">的类型是</span> list[int | str]<span class="z">，</span></span></div>
<div class="ln" style="top:750.50px;">28</div>
<div class="code" style="top:750.50px">    <span class="c-m"># <span class="z">而</span> calculate_sum <span class="z">需要的类型是</span> list[int]<span class="z">。</span></span></div>
<div class="ln" style="top:774.25px;">29</div>
<div class="code" style="top:774.25px">    <span class="c-v">total_score</span> = <span class="c-f">calculate_sum</span><span class="c-p1">(</span><span class="c-v">scores</span><span class="c-p1">)</span></div>
<div class="ln" style="top:798.00px;">30</div>
<div class="ln" style="top:821.75px;">31</div>
<div class="code" style="top:821.75px">    <span class="c-f">print</span><span class="c-p1">(</span><span class="c-k">f</span><span class="c-s">&quot;<span class="z">计算出的总分为</span>: </span><span class="c-p2">{</span><span class="c-v">total_score</span><span class="c-p2">}</span><span class="c-s">&quot;</span><span class="c-p1">)</span></div>
<div class="ln" style="top:845.50px;">32</div>
<div class="ln" style="top:869.25px;">33</div>
<div class="ln" style="top:893.00px;">34</div>
<div class="code" style="top:893.00px"><span class="c-c">if</span> <span class="c-v">__name__</span> == <span class="c-s">&quot;__main__&quot;</span>:</div>
<div class="ln" style="top:916.75px;">35</div>
<div class="code" style="top:916.75px">    <span class="c-f">main</span><span class="c-p1">()</span></div>
<div class="ln" style="top:940.50px;color:#4b5057;">36</div>
<svg style="left:1755px;top:108px;opacity:.46" width="100" height="90" viewBox="1755 108 100 90"><rect x="1759.30" y="108.40" width="3.75" height="1.600" fill="#569cd6"/><rect x="1764.30" y="108.40" width="16.25" height="1.600" fill="#dcdcaa"/><rect x="1780.55" y="108.40" width="1.25" height="1.600" fill="#ffd700"/><rect x="1781.80" y="108.40" width="8.75" height="1.600" fill="#9cdcfe"/><rect x="1790.55" y="108.40" width="1.25" height="1.600" fill="#d4d4d4"/><rect x="1793.05" y="108.40" width="5.00" height="1.600" fill="#4ec9b0"/><rect x="1798.05" y="108.40" width="1.25" height="1.600" fill="#da70d6"/><rect x="1799.30" y="108.40" width="3.75" height="1.600" fill="#4ec9b0"/><rect x="1803.05" y="108.40" width="1.25" height="1.600" fill="#da70d6"/><rect x="1804.30" y="108.40" width="1.25" height="1.600" fill="#ffd700"/><rect x="1806.80" y="108.40" width="2.50" height="1.600" fill="#d4d4d4"/><rect x="1810.55" y="108.40" width="3.75" height="1.600" fill="#4ec9b0"/><rect x="1814.30" y="108.40" width="1.25" height="1.600" fill="#d4d4d4"/><rect x="1764.30" y="110.90" width="3.75" height="1.600" fill="#ce9178"/><rect x="1764.30" y="113.40" width="42.50" height="1.600" fill="#ce9178"/><rect x="1764.30" y="115.90" width="3.75" height="1.600" fill="#ce9178"/><rect x="1764.30" y="118.40" width="6.25" height="1.600" fill="#9cdcfe"/><rect x="1771.80" y="118.40" width="1.25" height="1.600" fill="#d4d4d4"/><rect x="1774.30" y="118.40" width="1.25" height="1.600" fill="#b5cea8"/><rect x="1764.30" y="120.90" width="3.75" height="1.600" fill="#c586c0"/><rect x="1769.30" y="120.90" width="7.50" height="1.600" fill="#9cdcfe"/><rect x="1778.05" y="120.90" width="2.50" height="1.600" fill="#c586c0"/><rect x="1781.80" y="120.90" width="8.75" height="1.600" fill="#9cdcfe"/><rect x="1790.55" y="120.90" width="1.25" height="1.600" fill="#d4d4d4"/><rect x="1769.30" y="123.40" width="6.25" height="1.600" fill="#9cdcfe"/><rect x="1776.80" y="123.40" width="2.50" height="1.600" fill="#d4d4d4"/><rect x="1780.55" y="123.40" width="7.50" height="1.600" fill="#9cdcfe"/><rect x="1764.30" y="125.90" width="7.50" height="1.600" fill="#c586c0"/><rect x="1773.05" y="125.90" width="6.25" height="1.600" fill="#9cdcfe"/><rect x="1759.30" y="133.40" width="3.75" height="1.600" fill="#569cd6"/><rect x="1764.30" y="133.40" width="18.75" height="1.600" fill="#dcdcaa"/><rect x="1783.05" y="133.40" width="2.50" height="1.600" fill="#ffd700"/><rect x="1786.80" y="133.40" width="2.50" height="1.600" fill="#d4d4d4"/><rect x="1790.55" y="133.40" width="5.00" height="1.600" fill="#4ec9b0"/><rect x="1795.55" y="133.40" width="1.25" height="1.600" fill="#ffd700"/><rect x="1796.80" y="133.40" width="3.75" height="1.600" fill="#4ec9b0"/><rect x="1801.80" y="133.40" width="1.25" height="1.600" fill="#d4d4d4"/><rect x="1804.30" y="133.40" width="3.75" height="1.600" fill="#4ec9b0"/><rect x="1808.05" y="133.40" width="1.25" height="1.600" fill="#ffd700"/><rect x="1809.30" y="133.40" width="1.25" height="1.600" fill="#d4d4d4"/><rect x="1764.30" y="135.90" width="3.75" height="1.600" fill="#ce9178"/><rect x="1764.30" y="138.40" width="12.50" height="1.600" fill="#ce9178"/><rect x="1778.05" y="138.40" width="3.75" height="1.600" fill="#ce9178"/><rect x="1783.05" y="138.40" width="25.00" height="1.600" fill="#ce9178"/><rect x="1764.30" y="143.40" width="42.50" height="1.600" fill="#ce9178"/><rect x="1808.05" y="143.40" width="10.00" height="1.600" fill="#ce9178"/><rect x="1819.30" y="143.40" width="1.25" height="1.600" fill="#ce9178"/><rect x="1821.80" y="143.40" width="7.50" height="1.600" fill="#ce9178"/><rect x="1764.30" y="145.90" width="60.00" height="1.600" fill="#ce9178"/><rect x="1764.30" y="148.40" width="3.75" height="1.600" fill="#ce9178"/><rect x="1764.30" y="150.90" width="7.50" height="1.600" fill="#c586c0"/><rect x="1773.05" y="150.90" width="1.25" height="1.600" fill="#ffd700"/><rect x="1774.30" y="150.90" width="3.75" height="1.600" fill="#b5cea8"/><rect x="1778.05" y="150.90" width="1.25" height="1.600" fill="#d4d4d4"/><rect x="1780.55" y="150.90" width="2.50" height="1.600" fill="#b5cea8"/><rect x="1783.05" y="150.90" width="1.25" height="1.600" fill="#d4d4d4"/><rect x="1785.55" y="150.90" width="2.50" height="1.600" fill="#b5cea8"/><rect x="1788.05" y="150.90" width="1.25" height="1.600" fill="#d4d4d4"/><rect x="1790.55" y="150.90" width="5.00" height="1.600" fill="#ce9178"/><rect x="1795.55" y="150.90" width="1.25" height="1.600" fill="#ffd700"/><rect x="1759.30" y="158.40" width="3.75" height="1.600" fill="#569cd6"/><rect x="1764.30" y="158.40" width="5.00" height="1.600" fill="#dcdcaa"/><rect x="1769.30" y="158.40" width="2.50" height="1.600" fill="#ffd700"/><rect x="1771.80" y="158.40" width="1.25" height="1.600" fill="#d4d4d4"/><rect x="1764.30" y="160.90" width="6.25" height="1.600" fill="#dcdcaa"/><rect x="1770.55" y="160.90" width="1.25" height="1.600" fill="#ffd700"/><rect x="1771.80" y="160.90" width="26.25" height="1.600" fill="#ce9178"/><rect x="1798.05" y="160.90" width="1.25" height="1.600" fill="#ffd700"/><rect x="1764.30" y="163.40" width="7.50" height="1.600" fill="#9cdcfe"/><rect x="1773.05" y="163.40" width="1.25" height="1.600" fill="#d4d4d4"/><rect x="1775.55" y="163.40" width="18.75" height="1.600" fill="#dcdcaa"/><rect x="1794.30" y="163.40" width="2.50" height="1.600" fill="#ffd700"/><rect x="1764.30" y="168.40" width="6.25" height="1.600" fill="#dcdcaa"/><rect x="1770.55" y="168.40" width="1.25" height="1.600" fill="#ffd700"/><rect x="1771.80" y="168.40" width="21.25" height="1.600" fill="#ce9178"/><rect x="1793.05" y="168.40" width="1.25" height="1.600" fill="#ffd700"/><rect x="1764.30" y="170.90" width="1.25" height="1.600" fill="#6a9955"/><rect x="1766.80" y="170.90" width="2.50" height="1.600" fill="#6a9955"/><rect x="1770.55" y="170.90" width="17.50" height="1.600" fill="#6a9955"/><rect x="1764.30" y="173.40" width="1.25" height="1.600" fill="#6a9955"/><rect x="1766.80" y="173.40" width="5.00" height="1.600" fill="#6a9955"/><rect x="1773.05" y="173.40" width="7.50" height="1.600" fill="#6a9955"/><rect x="1781.80" y="173.40" width="10.00" height="1.600" fill="#6a9955"/><rect x="1793.05" y="173.40" width="10.00" height="1.600" fill="#6a9955"/><rect x="1804.30" y="173.40" width="1.25" height="1.600" fill="#6a9955"/><rect x="1806.80" y="173.40" width="7.50" height="1.600" fill="#6a9955"/><rect x="1764.30" y="175.90" width="1.25" height="1.600" fill="#6a9955"/><rect x="1766.80" y="175.90" width="2.50" height="1.600" fill="#6a9955"/><rect x="1770.55" y="175.90" width="16.25" height="1.600" fill="#6a9955"/><rect x="1788.05" y="175.90" width="15.00" height="1.600" fill="#6a9955"/><rect x="1804.30" y="175.90" width="13.75" height="1.600" fill="#6a9955"/><rect x="1764.30" y="178.40" width="13.75" height="1.600" fill="#9cdcfe"/><rect x="1779.30" y="178.40" width="1.25" height="1.600" fill="#d4d4d4"/><rect x="1781.80" y="178.40" width="16.25" height="1.600" fill="#dcdcaa"/><rect x="1798.05" y="178.40" width="1.25" height="1.600" fill="#ffd700"/><rect x="1799.30" y="178.40" width="7.50" height="1.600" fill="#9cdcfe"/><rect x="1806.80" y="178.40" width="1.25" height="1.600" fill="#ffd700"/><rect x="1764.30" y="183.40" width="6.25" height="1.600" fill="#dcdcaa"/><rect x="1770.55" y="183.40" width="1.25" height="1.600" fill="#ffd700"/><rect x="1771.80" y="183.40" width="1.25" height="1.600" fill="#569cd6"/><rect x="1773.05" y="183.40" width="20.00" height="1.600" fill="#ce9178"/><rect x="1794.30" y="183.40" width="1.25" height="1.600" fill="#da70d6"/><rect x="1795.55" y="183.40" width="13.75" height="1.600" fill="#9cdcfe"/><rect x="1809.30" y="183.40" width="1.25" height="1.600" fill="#da70d6"/><rect x="1810.55" y="183.40" width="1.25" height="1.600" fill="#ce9178"/><rect x="1811.80" y="183.40" width="1.25" height="1.600" fill="#ffd700"/><rect x="1759.30" y="190.90" width="2.50" height="1.600" fill="#c586c0"/><rect x="1763.05" y="190.90" width="10.00" height="1.600" fill="#9cdcfe"/><rect x="1774.30" y="190.90" width="2.50" height="1.600" fill="#d4d4d4"/><rect x="1778.05" y="190.90" width="12.50" height="1.600" fill="#ce9178"/><rect x="1790.55" y="190.90" width="1.25" height="1.600" fill="#d4d4d4"/><rect x="1764.30" y="193.40" width="5.00" height="1.600" fill="#dcdcaa"/><rect x="1769.30" y="193.40" width="2.50" height="1.600" fill="#ffd700"/></svg>
<div class="abs" style="left:1902.00px;top:108.00px;width:1.00px;height:450.00px;background:#2a2a2a"></div>
<div class="abs" style="left:1903.00px;top:108.00px;width:4.00px;height:450.00px;background:#434343"></div>
<div class="abs" style="left:1903.00px;top:314.00px;width:4.00px;height:2.00px;background:#8c8c8a"></div>
<div class="abs" style="left:1902.00px;top:558.00px;width:1.00px;height:428.00px;background:#1b1b1b"></div>
<div class="abs" style="left:0;top:987px;width:42.8px;height:24px;background:#0078d4"></div>
<svg style="left:0;top:986px" width="600" height="25" viewBox="0 986 600 25" fill="none" stroke="#cccccc" stroke-width="1.200" stroke-linejoin="round">
<path stroke="#ffffff" stroke-width="1.300" d="M16 996.200l4.700 4.700-4.700 4.700M26.700 992.200l-4.700 4.600 4.700 4.600"/>
<circle cx="57.900" cy="992.900" r="2.300"/><circle cx="57.900" cy="1005.400" r="2.300"/><circle cx="65.400" cy="996.700" r="2.300"/>
<path d="M57.900 995.200v7.900M65.400 999c0 2.600-2.400 3.200-4.700 3.400-1.600.2-2.800.7-2.800 1"/>
<path d="M144.600 1004.800h-.6a3.300 3.300 0 0 1-.4-6.500 4.700 4.700 0 0 1 9.200-.600 3.600 3.600 0 0 1 .5 7.100h-.8M148.500 1007.600v-7M146 1002.600l2.500-2.500 2.500 2.500"/>
<circle cx="180.600" cy="994.500" r="2.200"/><circle cx="180.600" cy="1004.100" r="2.200"/><circle cx="189.800" cy="999.100" r="2.200"/>
<path d="M185.200 991.200v16M180.600 996.700v5.200M182.800 1004.100h2.400M189.800 1001.300c0 2-2 2.800-4.600 2.800"/>
<path d="M229.900 992.400c-5.500.5-9.300 4-11.300 8.400l3.900 4.700c4.400-2.200 7.500-6.500 7.400-13.100zM218.600 1000.800l-2.800.2v4.800M222.500 1005.500l.3 1.200 4.200-.2v-4.500"/><circle cx="224.600" cy="997.800" r="1.200" fill="#cccccc" stroke="none"/>
<path d="M234 1006.300l2.200-2.200M236.200 1000.200l4.200 4.200c-1.800 1.700-4.300 1.500-5.400.4-1.100-1.100-1.400-2.700 1.200-4.600zM239.500 997.300l3.900 3.900c2.100-1.500 2.500-3.500 1.200-4.900-1.400-1.400-3.600-1-5.100 1zM245 995.900l2.200-2.200"/>
<circle cx="359.900" cy="998.900" r="6.900"/><path d="M357 996l5.800 5.800M362.800 996l-5.800 5.800"/>
<path d="M394.500 992.600l7 12.800h-14zM394.500 997.200v4.300M394.500 1002.800v1.400"/>
<circle cx="428.100" cy="998.900" r="6.900"/><path d="M428.100 997.900v4.800M428.100 994.900v1.500"/>
</svg>
<span class="t " style="left:74.90px;top:991.10px;font-size:15.00px;color:#cccccc;letter-spacing:0.708px;">master*</span>
<span class="t " style="left:253.70px;top:991.10px;font-size:15.00px;color:#cccccc;letter-spacing:0.394px;">Launchpad</span>
<span class="t " style="left:373.40px;top:991.10px;font-size:15.00px;color:#cccccc;">0</span>
<span class="t " style="left:407.40px;top:991.10px;font-size:15.00px;color:#cccccc;">1</span>
<span class="t " style="left:441.00px;top:991.10px;font-size:15.00px;color:#cccccc;">1</span>
<span class="t " style="left:469.60px;top:991.10px;font-size:15.00px;color:#cccccc;letter-spacing:-0.218px;">-- NORMAL --</span>
<span class="t " style="left:1224.00px;top:991.10px;font-size:15.00px;color:#cccccc;letter-spacing:-0.021px;">Ln 18, Col 30</span>
<span class="t " style="left:1333.00px;top:991.10px;font-size:15.00px;color:#cccccc;letter-spacing:-0.219px;">Spaces: 4</span>
<span class="t " style="left:1418.50px;top:991.10px;font-size:15.00px;color:#cccccc;transform-origin:0.00px 0;transform:scaleX(0.9388);">UTF-8</span>
<span class="t " style="left:1479.40px;top:991.10px;font-size:15.00px;color:#cccccc;transform-origin:0.00px 0;transform:scaleX(0.8343);">LF</span>
<span class="t " style="left:1516.40px;top:991.10px;font-size:15.00px;color:#cccccc;letter-spacing:-0.225px;">{ }</span>
<span class="t " style="left:1540.90px;top:991.10px;font-size:15.00px;color:#cccccc;letter-spacing:0.090px;">Python</span>
<span class="t " style="left:1647.20px;top:991.10px;font-size:15.00px;color:#cccccc;letter-spacing:0.253px;">3.12.11 (example)</span>
<span class="t " style="left:1812.40px;top:991.10px;font-size:15.00px;color:#cccccc;letter-spacing:-0.192px;">Go Live</span>
<svg style="left:1600px;top:986px" width="307" height="25" viewBox="1600 986 307 25" fill="none" stroke="#cccccc" stroke-width="1.200" stroke-linejoin="round">
<path fill="#cccccc" stroke="none" fill-rule="evenodd" d="M1613.400 991c-2.500 0-3.400 1.600-3.400 3.300 0 .6.100 1.200.3 1.700-.9.600-1.400 1.600-1.400 3v2.600c0 2.600 4.200 5.300 9.200 5.300s9.200-2.700 9.200-5.300V999c0-1.400-.5-2.400-1.400-3 .2-.5.3-1.100.3-1.700 0-1.700-.9-3.300-3.400-3.300-1.900 0-3.500.9-4.200 2.300h-1c-.7-1.400-2.300-2.300-4.200-2.300zm-.2 1.600c1.600 0 2.800 1 2.800 2.300s-1.200 2.300-2.800 2.300-1.900-1-1.900-2.300.3-2.300 1.900-2.300zm9.800 0c1.600 0 1.900 1 1.900 2.300s-.3 2.300-1.900 2.300-2.800-1-2.800-2.300 1.200-2.300 2.800-2.300zm-11.200 6.200h12.600v4.500c-1.400 1.200-3.700 2-6.300 2s-4.900-.8-6.300-2zm3.200 1.400v2.600h1.500v-2.600zm4.700 0v2.600h1.500v-2.600z"/>
<circle cx="1799.300" cy="998.200" r="1.600" fill="#cccccc" stroke="none"/><path d="M1799.300 999.500v7.400" stroke-width="2"/>
<path d="M1794.66 1002.46A6.30 6.30 0 1 1 1803.94 1002.46M1796.35 1000.26A3.60 3.60 0 1 1 1802.25 1000.26" stroke-width="1.100"/>
<path d="M1887.400 1004.800c.9-1.300 1.200-2.600 1.200-4.300v-3.200a4.300 4.300 0 0 1 8.600 0v3.200c0 1.700.3 3 1.200 4.300zM1891.300 1005.200c.2 1 .8 1.500 1.600 1.500s1.400-.5 1.600-1.500"/>
</svg>
<span class="t" style="left:1783.3px;top:976.65px;font-size:20.500px;color:#969696;opacity:0.4;letter-spacing:0.320px">kitlau's blog</span>
</body></html>
